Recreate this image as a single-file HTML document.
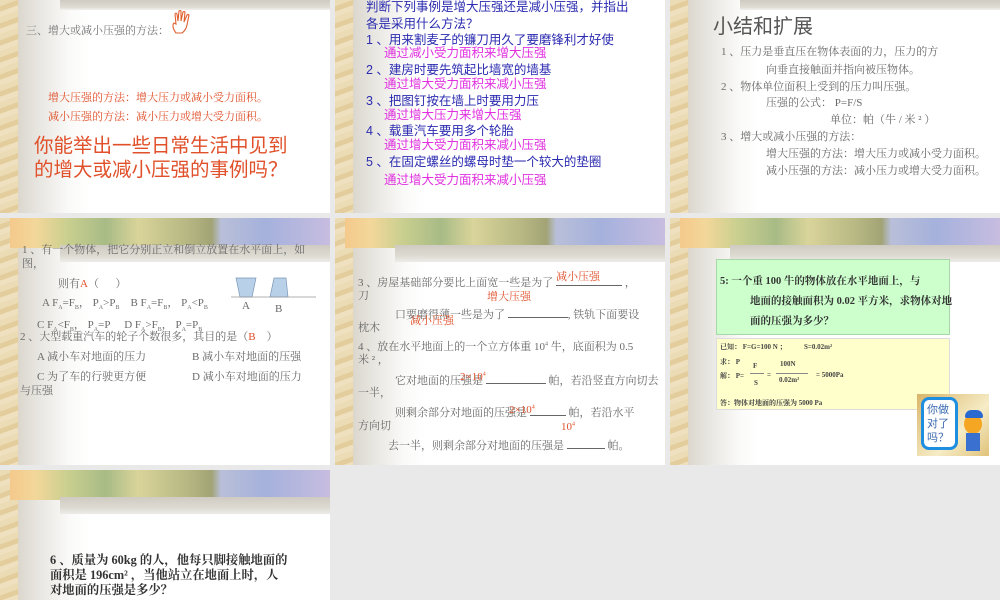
<!DOCTYPE html>
<html><head><meta charset="utf-8"><style>
*{margin:0;padding:0;box-sizing:border-box}
body{width:1000px;height:600px;background:#e9e9e9;position:relative;overflow:hidden;font-family:"Liberation Serif","Noto Serif CJK SC",serif}
.s{position:absolute;overflow:hidden;background:linear-gradient(90deg,#e8d6ad 0,#e6d3a8 17px,#dcd8cf 19px,#e9e7e2 40px,#fafaf9 70px,#fff 90px)}
.s::before{content:"";position:absolute;left:0;top:0;width:18px;height:100%;background:repeating-linear-gradient(160deg,#ecdcb6 0 6px,#e3cd9c 6px 11px,#efe1c0 11px 16px)}
.t{position:absolute;white-space:nowrap}
.g{color:#6a6a6a;font-size:11px}
.r{color:#e0502a}
.b{color:#2b2bb0;font-size:12.5px;font-family:"Liberation Sans","Noto Sans CJK SC",sans-serif}
.p{color:#e030e0;font-size:12.5px;font-family:"Liberation Sans","Noto Sans CJK SC",sans-serif}
.top{position:absolute;left:60px;top:0;right:0;height:10px;background:linear-gradient(180deg,#cfcbc2,#dedbd3 70%,#f2f1ee)}
.ban{position:absolute;left:10px;top:0;right:0;height:44px}
.ban .a{position:absolute;left:0;top:0;width:100%;height:30px;background:linear-gradient(90deg,#f4c98c 0,#f3d79a 8%,#c9cf8f 18%,#a8bb86 30%,#d9d49a 40%,#b7b883 55%,#a2a476 63%,#b9bfd9 66%,#a5b1dc 80%,#c7bde0 100%)}
.ban .c{position:absolute;left:50px;top:27px;right:0;height:17px;background:linear-gradient(180deg,#cfcbc2,#dcd9d0 60%,#eeece8)}
sub{font-size:6px}sup{font-size:6px}
u.l{display:inline-block;border-bottom:1px solid #666;height:10px;vertical-align:baseline}
</style></head><body>

<div class="s" style="left:0;top:0;width:330px;height:213px">
<div class="top"></div>
<div class="t g" style="left:26px;top:22px;color:#777">三、增大或减小压强的方法：</div>
<svg style="position:absolute;left:170px;top:9px" width="24" height="26" viewBox="0 0 24 26"><path d="M6 24 C3 20 2 16 4 14 L6 15 L5 5 Q6 3 7 5 L8 12 L9 2 Q10 1 11 2 L11 12 L13 3 Q14 2 15 3 L14 13 L17 6 Q18 5 19 6 L17 16 Q16 21 12 24 Z" fill="none" stroke="#e06030" stroke-width="1.1"/></svg>
<div class="t r" style="left:48px;top:89px;font-size:11px">增大压强的方法：增大压力或减小受力面积。</div>
<div class="t r" style="left:48px;top:108px;font-size:11px">减小压强的方法：减小压力或增大受力面积。</div>
<div class="t r" style="left:34px;top:134px;font-size:19.5px;line-height:24px;font-family:'Liberation Sans','Noto Sans CJK SC',sans-serif">你能举出一些日常生活中见到<br>的增大或减小压强的事例吗？</div>
</div>

<div class="s" style="left:335px;top:0;width:330px;height:213px">
<div class="t b" style="left:31px;top:-4px">判断下列事例是增大压强还是减小压强，并指出</div>
<div class="t b" style="left:31px;top:13px">各是采用什么方法？</div>
<div class="t b" style="left:31px;top:29px">1 、用来割麦子的镰刀用久了要磨锋利才好使</div>
<div class="t p" style="left:49px;top:42px">通过减小受力面积来增大压强</div>
<div class="t b" style="left:31px;top:59px">2 、建房时要先筑起比墙宽的墙基</div>
<div class="t p" style="left:49px;top:73px">通过增大受力面积来减小压强</div>
<div class="t b" style="left:31px;top:90px">3 、把图钉按在墙上时要用力压</div>
<div class="t p" style="left:49px;top:104px">通过增大压力来增大压强</div>
<div class="t b" style="left:31px;top:120px">4 、载重汽车要用多个轮胎</div>
<div class="t p" style="left:49px;top:134px">通过增大受力面积来减小压强</div>
<div class="t b" style="left:31px;top:151px">5 、在固定螺丝的螺母时垫一个较大的垫圈</div>
<div class="t p" style="left:49px;top:169px">通过增大受力面积来减小压强</div>
</div>

<div class="s" style="left:670px;top:0;width:330px;height:213px">
<div class="top" style="left:70px"></div>
<div class="t" style="left:43px;top:10px;font-size:20px;color:#555;font-family:'Liberation Sans','Noto Sans CJK SC',sans-serif">小结和扩展</div>
<div class="t g" style="left:51px;top:43px">1 、压力是垂直压在物体表面的力，压力的方</div>
<div class="t g" style="left:96px;top:61px">向垂直接触面并指向被压物体。</div>
<div class="t g" style="left:51px;top:78px">2 、物体单位面积上受到的压力叫压强。</div>
<div class="t g" style="left:96px;top:94px">压强的公式：  P=F/S</div>
<div class="t g" style="left:160px;top:111px">单位：帕（牛 / 米 ² ）</div>
<div class="t g" style="left:51px;top:128px">3 、增大或减小压强的方法：</div>
<div class="t g" style="left:96px;top:145px">增大压强的方法：增大压力或减小受力面积。</div>
<div class="t g" style="left:96px;top:162px">减小压强的方法：减小压力或增大受力面积。</div>
</div>

<div class="s" style="left:0;top:218px;width:330px;height:247px">
<div class="ban"><div class="a"></div><div class="c"></div></div>
<div class="t g" style="left:22px;top:23px">1 、有一个物体，把它分别正立和倒立放置在水平面上，如</div>
<div class="t g" style="left:22px;top:37px">图，</div>
<div class="t g" style="left:58px;top:57px">则有<span class="r">A</span>（&nbsp;&nbsp;&nbsp;&nbsp;&nbsp;&nbsp;）</div>
<div class="t g" style="left:42px;top:76px">A  F<sub>A</sub>=F<sub>B</sub>，  P<sub>A</sub>&gt;P<sub>B</sub>&nbsp;&nbsp;&nbsp;&nbsp;B F<sub>A</sub>=F<sub>B</sub>，  P<sub>A</sub>&lt;P<sub>B</sub></div>
<svg style="position:absolute;left:230px;top:58px" width="90" height="40"><path d="M6 2 H26 L22 21 H10 Z" fill="#b8d0e8" stroke="#7a96b8" stroke-width=".7"/><path d="M44 2 H56 L58 21 H40 Z" fill="#b8d0e8" stroke="#7a96b8" stroke-width=".7"/><line x1="1" y1="21" x2="86" y2="21" stroke="#999" stroke-width=".8"/></svg>
<div class="t g" style="left:242px;top:82px">A</div>
<div class="t g" style="left:275px;top:85px">B</div>
<div class="t g" style="left:37px;top:98px">C F<sub>A</sub>&lt;F<sub>B</sub>，  P<sub>A</sub>=P&nbsp;&nbsp;&nbsp;&nbsp;&nbsp;D F<sub>A</sub>&gt;F<sub>B</sub>，  P<sub>A</sub>=P<sub>B</sub></div>
<div class="t g" style="left:20px;top:110px">2 、大型载重汽车的轮子个数很多，其目的是（<span class="r">B</span>&nbsp;&nbsp;&nbsp;&nbsp;）</div>
<div class="t g" style="left:37px;top:130px">A  减小车对地面的压力</div>
<div class="t g" style="left:192px;top:130px">B  减小车对地面的压强</div>
<div class="t g" style="left:37px;top:150px">C  为了车的行驶更方便</div>
<div class="t g" style="left:192px;top:150px">D  减小车对地面的压力</div>
<div class="t g" style="left:20px;top:164px">与压强</div>
</div>

<div class="s" style="left:335px;top:218px;width:330px;height:247px">
<div class="ban"><div class="a"></div><div class="c"></div></div>
<div class="t g" style="left:23px;top:56px">3 、房屋基础部分要比上面宽一些是为了 <u class="l" style="width:66px"></u> ，</div>
<div class="t r" style="left:221px;top:50px;font-size:11px">减小压强</div>
<div class="t g" style="left:23px;top:69px">刀</div>
<div class="t r" style="left:152px;top:70px;font-size:11px">增大压强</div>
<div class="t g" style="left:60px;top:88px">口要磨得薄一些是为了 <u class="l" style="width:60px"></u>, 铁轨下面要设</div>
<div class="t r" style="left:75px;top:94px;font-size:11px">减小压强</div>
<div class="t g" style="left:23px;top:101px">枕木</div>
<div class="t g" style="left:23px;top:120px">4 、放在水平地面上的一个立方体重 10<sup>4</sup> 牛，底面积为 0.5</div>
<div class="t g" style="left:23px;top:133px">米 ² ，</div>
<div class="t g" style="left:60px;top:154px">它对地面的压强是 <u class="l" style="width:60px"></u> 帕，若沿竖直方向切去</div>
<div class="t r" style="left:125px;top:153px;font-size:11px">2×10<sup>4</sup></div>
<div class="t g" style="left:23px;top:166px">一半，</div>
<div class="t g" style="left:60px;top:186px">则剩余部分对地面的压强是 <u class="l" style="width:36px"></u> 帕，若沿水平</div>
<div class="t r" style="left:174px;top:186px;font-size:11px">2×10<sup>4</sup></div>
<div class="t g" style="left:23px;top:199px">方向切</div>
<div class="t r" style="left:226px;top:203px;font-size:11px">10<sup>4</sup></div>
<div class="t g" style="left:53px;top:219px">去一半，则剩余部分对地面的压强是 <u class="l" style="width:38px"></u> 帕。</div>
</div>

<div class="s" style="left:670px;top:218px;width:330px;height:247px">
<div class="ban"><div class="a"></div><div class="c"></div></div>
<div style="position:absolute;left:46px;top:41px;width:234px;height:76px;background:#ccffcc;border:1px solid #a8d8a8"></div>
<div class="t" style="left:50px;top:55px;font-size:10.5px;font-weight:bold;color:#333">5: 一个重 100 牛的物体放在水平地面上，与</div>
<div class="t" style="left:80px;top:75px;font-size:10.5px;font-weight:bold;color:#333">地面的接触面积为 0.02 平方米，求物体对地</div>
<div class="t" style="left:80px;top:95px;font-size:10.5px;font-weight:bold;color:#333">面的压强为多少？</div>
<div style="position:absolute;left:46px;top:120px;width:234px;height:72px;background:#ffffcc;border:1px solid #ddd"></div>
<div class="t" style="left:50px;top:124px;font-size:7px;font-weight:bold;color:#444">已知：  F=G=100 N ；&nbsp;&nbsp;&nbsp;&nbsp;&nbsp;&nbsp;&nbsp;&nbsp;&nbsp;&nbsp;S=0.02m²</div>
<div class="t" style="left:50px;top:139px;font-size:7px;font-weight:bold;color:#444">求：  P</div>
<div class="t" style="left:50px;top:153px;font-size:7px;font-weight:bold;color:#444">解：  P=</div>
<div class="t" style="left:83px;top:144px;font-size:7px;font-weight:bold;color:#444">F</div>
<div style="position:absolute;left:80px;top:155px;width:14px;border-top:1px solid #888"></div>
<div class="t" style="left:84px;top:161px;font-size:7px;font-weight:bold;color:#444">S</div>
<div class="t" style="left:97px;top:153px;font-size:7px;font-weight:bold;color:#444">=</div>
<div class="t" style="left:110px;top:142px;font-size:7px;font-weight:bold;color:#444">100N</div>
<div style="position:absolute;left:106px;top:155px;width:32px;border-top:1px solid #888"></div>
<div class="t" style="left:109px;top:158px;font-size:7px;font-weight:bold;color:#444">0.02m²</div>
<div class="t" style="left:146px;top:153px;font-size:7px;font-weight:bold;color:#444">=  5000Pa</div>
<div class="t" style="left:50px;top:180px;font-size:7px;font-weight:bold;color:#444">答：物体对地面的压强为  5000 Pa</div>
<div style="position:absolute;left:247px;top:176px;width:72px;height:62px;background:linear-gradient(135deg,#d9b56a,#f6ecc6 60%,#e0c27a)"></div>
<div style="position:absolute;left:251px;top:179px;width:37px;height:53px;background:#fff;border:3px solid #1e8ee0;border-radius:8px"></div>
<div class="t" style="left:257px;top:185px;font-size:11px;line-height:14px;color:#3a6ab0;white-space:normal;width:26px;font-family:'Liberation Sans','Noto Sans CJK SC',sans-serif">你做对了吗？</div>
<div style="position:absolute;left:294px;top:196px;width:18px;height:20px;background:#f5a623;border-radius:50%"></div>
<div style="position:absolute;left:295px;top:192px;width:18px;height:8px;background:#2a6ad0;border-radius:8px 8px 2px 2px"></div>
<div style="position:absolute;left:296px;top:215px;width:14px;height:18px;background:#3a70d0"></div>
</div>

<div class="s" style="left:0;top:470px;width:330px;height:130px">
<div class="ban"><div class="a"></div><div class="c"></div></div>
<div class="t" style="left:50px;top:83px;font-size:12.3px;font-weight:bold;color:#333;line-height:15px">6 、质量为 60kg 的人，他每只脚接触地面的<br>面积是 196cm² ，当他站立在地面上时，人<br>对地面的压强是多少？</div>
</div>

</body></html>
